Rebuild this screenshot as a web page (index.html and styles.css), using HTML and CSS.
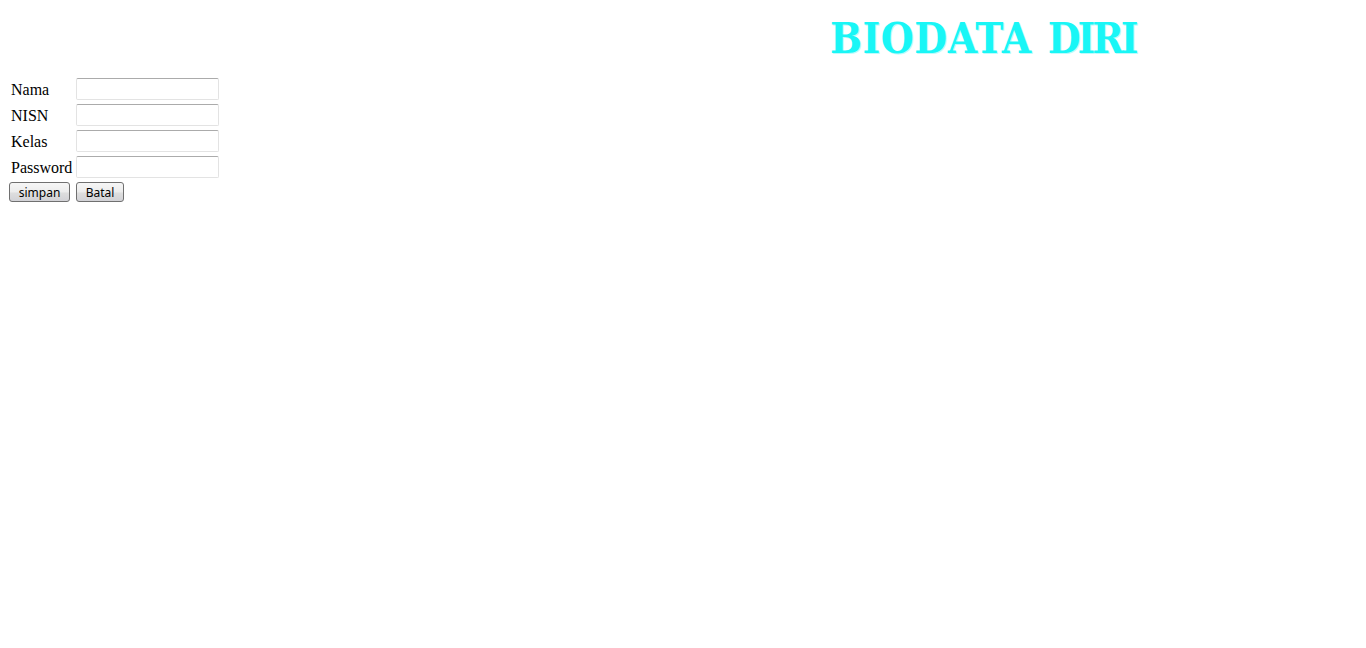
FILE: index.html
```html
<!DOCTYPE html>
<html lang="en">

<head>
    <meta charset="UTF-8">
    <title>Biodata Diri</title>
    <link rel="stylesheet" href="styles.css">
</head>

<body>
    <h1 class="title"><span class="title-first">BIODATA</span> <span class="title-last">DIRI</span></h1>
    <form class="form">
        <label class="row"><span class="label">Nama</span><input class="field" type="text" name="nama"></label>
        <label class="row"><span class="label">NISN</span><input class="field" type="text" name="nisn"></label>
        <label class="row"><span class="label">Kelas</span><input class="field" type="text" name="kelas"></label>
        <label class="row"><span class="label">Password</span><input class="field" type="password" name="password"></label>
        <div class="actions">
            <button class="btn btn-simpan" type="submit">simpan</button>
            <button class="btn btn-batal" type="reset">Batal</button>
        </div>
    </form>
</body>

</html>
```

FILE: styles.css
```css
html, body {
    height: 100%;
}
body {
    margin: 0;
    background: #fff;
    font-family: "Liberation Serif", serif;
    color: #000;
    overflow: hidden;
}
.title {
    margin: 0;
    padding: 12px 0 0 830px;
    height: 66px;
    box-sizing: border-box;
    font-family: "DejaVu Serif Condensed", "DejaVu Serif", serif;
    font-size: 42px;
    line-height: 54px;
    font-weight: bold;
    white-space: nowrap;
    word-spacing: 3px;
    color: #19f6f6;
    text-shadow: 1px 1px 0 #bdfbfb;
}
.title-first {
    letter-spacing: 0.6px;
}
.title-last {
    letter-spacing: -3px;
}
.form {
    padding-left: 11px;
    margin-top: 12px;
}
.row {
    display: flex;
    align-items: center;
    height: 22px;
    margin-bottom: 4px;
    font-size: 16px;
}
.label {
    width: 65px;
    padding-top: 2px;
}
.field {
    width: 143px;
    height: 22px;
    box-sizing: border-box;
    padding: 0 3px;
    background: #fff;
    border: 1px solid #e3e3e3;
    border-top-color: #ababab;
    border-radius: 2px;
    outline: none;
}
.actions {
    display: flex;
    gap: 6px;
    margin-left: -2px;
}
.btn {
    height: 20px;
    box-sizing: border-box;
    padding: 1px 0 0;
    font-family: "Noto Sans", sans-serif;
    font-size: 12px;
    line-height: 18px;
    color: #000;
    border: 1px solid #707070;
    border-radius: 3px;
    background: linear-gradient(#f6f6f6 0%, #ececec 50%, #dedede 55%, #d2d2d6 100%);
}
.btn-simpan {
    width: 61px;
}
.btn-batal {
    width: 48px;
}
```
